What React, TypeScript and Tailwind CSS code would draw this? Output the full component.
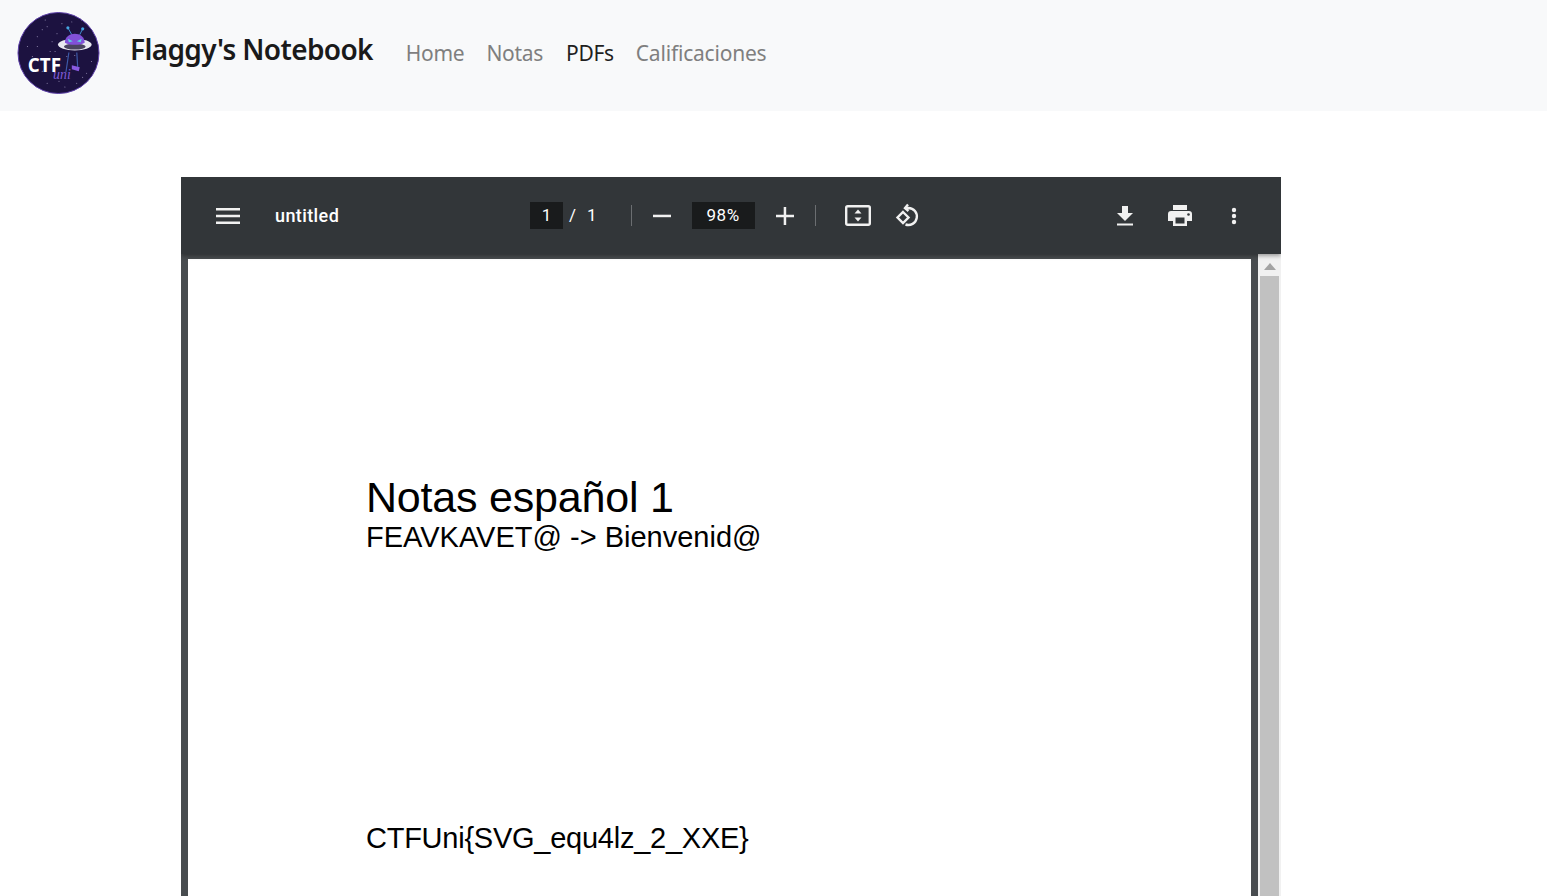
import React from "react";

function Logo() {
  const stars = [[20,25],[30,15],[15,45],[12,55],[25,60],[35,30],[45,12],[55,10],[40,22],[70,62],[72,70],[60,72],[30,72],[20,35],[65,8],[75,50],[50,45],[38,40],[48,76],[25,18],[58,44],[10,35],[33,40],[28,8],[66,66],[42,70]];
  return (
    <svg width="83" height="82" viewBox="0 0 83 83" className="shrink-0">
      <circle cx="41.500" cy="41.500" r="41" fill="#1c1240" stroke="#5b3ea8" strokeWidth="1" />
      {stars.map(([x, y], i) => (
        <circle key={i} cx={x} cy={y} r="0.500" fill="#cfc8e8" />
      ))}
      <path d="M51 16l4 7M66 17l-3 6" stroke="#3f8fd0" strokeWidth="1" />
      <circle cx="51" cy="16" r="1.600" fill="#45a5e0" />
      <circle cx="66" cy="17" r="1.600" fill="#45a5e0" />
      <ellipse cx="58" cy="33" rx="17" ry="6" fill="#e8e8f0" />
      <ellipse cx="58" cy="35" rx="11" ry="3" fill="#4a4560" />
      <path d="M48 31c0-12 20-12 20 0c-5 3-15 3-20 0z" fill="#8150d8" />
      <path d="M51 27l5 2.500l-4 1zM65 27l-5 2.500l4 1z" fill="#5fd0e0" />
      <path d="M52 41l-3 20M60 41l1 16" stroke="#3d5aa8" strokeWidth="1.200" fill="none" />
      <path d="M55 54l8 2l-1 4l-7-2z" fill="#8a5ae0" />
      <text x="10.500" y="61" fill="#fff" fontSize="19" fontWeight="700" fontFamily="'Open Sans', sans-serif">CTF</text>
      <text x="36" y="68" fill="#7f5bd6" fontSize="14" fontStyle="italic" fontFamily="'Liberation Serif', serif">uni</text>
    </svg>
  );
}

function Divider() {
  return <div className="h-[21px] w-px bg-[#6b6e71]" />;
}

export default function App() {
  return (
    <div className="h-[896px] overflow-hidden bg-white font-['Liberation_Sans',sans-serif]">
      <nav className="flex h-[111px] items-center bg-[#f8f9fa] pb-[6px] pl-[17px]">
        <Logo />
        <span className="ml-[30px] -translate-y-[4px] font-['Noto_Sans',sans-serif] text-[28px] font-semibold tracking-[-0.65px] text-[#1a1a1a]">
          Flaggy's Notebook
        </span>
        <div className="ml-[33px] mt-[2px] flex gap-[22px] font-['Noto_Sans',sans-serif] text-[21px] tracking-[-0.3px] text-[#7f7f7f]">
          <span>Home</span>
          <span>Notas</span>
          <span className="ml-px text-[#1f1f1f]">PDFs</span>
          <span className="tracking-[-0.2px]">Calificaciones</span>
        </div>
      </nav>

      <div className="ml-[181px] mt-[66px] flex h-[719px] w-[1100px] flex-col overflow-hidden bg-[#484c4f]">
        <div className="relative z-10 flex h-[77px] shrink-0 items-center bg-[#323639] pl-[35px] pr-[44px] font-['Roboto',sans-serif] text-white shadow-[0_2px_4px_rgba(0,0,0,0.35)]">
          <svg width="24" height="18" viewBox="0 0 24 18" fill="#f1f1f1" className="mt-[1px]">
            <path d="M0 1h24v2.500H0zM0 7.800h24v2.500H0zM0 14.500h24v2.500H0z" />
          </svg>
          <span className="ml-[35px] w-[255px] text-[18px] font-medium tracking-[0.4px]">untitled</span>
          <div className="flex h-[27px] w-[33px] items-center justify-center bg-[#191b1c] text-[17px]">1</div>
          <span className="ml-[6px] text-[17px]">/</span>
          <span className="ml-[11px] text-[17px]">1</span>
          <div className="ml-[34px]"><Divider /></div>
          <svg width="18" height="18" viewBox="0 0 18 18" fill="#f1f1f1" className="ml-[21px]">
            <path d="M0 7.700h18v2.500H0z" />
          </svg>
          <div className="ml-[21px] flex h-[27px] w-[63px] items-center justify-center bg-[#191b1c] text-[17px] tracking-[0.5px]">98%</div>
          <svg width="18" height="18" viewBox="0 0 18 18" fill="#f1f1f1" className="ml-[21px]">
            <path d="M0 7.700h7.700V0h2.500v7.700H18v2.500h-7.800V18H7.700v-7.800H0z" />
          </svg>
          <div className="ml-[21px]"><Divider /></div>
          <svg width="26" height="21" viewBox="0 0 26 21" fill="none" className="ml-[29px]">
            <rect x="1.200" y="1.200" width="23.600" height="18.600" rx="1.500" stroke="#f1f1f1" strokeWidth="2.400" />
            <path d="M13 4.500l3.500 4h-7zM13 16.500l3.500-4h-7z" fill="#f1f1f1" />
          </svg>
          <svg width="26" height="26" viewBox="0 0 26 26" fill="none" className="ml-[24px]">
            <path d="M13 1.500l-3 3.500l3.500 3" stroke="#f1f1f1" strokeWidth="2.400" />
            <path d="M10.500 5h3a8.500 8.500 0 1 1-3 16.500" stroke="#f1f1f1" strokeWidth="2.400" />
            <path d="M8 9l5.500 5.500l-5.500 5.500l-5.500-5.500z" stroke="#f1f1f1" strokeWidth="2.400" />
          </svg>
          <div className="flex-1" />
          <svg width="18" height="20" viewBox="0 0 18 20" fill="#f1f1f1">
            <path d="M6 0h6v7h5l-8 8l-8-8h5zM1 17.500h16v2H1z" />
          </svg>
          <svg width="24" height="21" viewBox="0 0 24 21" fill="#f1f1f1" className="ml-[34px]">
            <path d="M5 0h14v5H5zM3 6h18a3 3 0 0 1 3 3v7h-5v5H5v-5H0V9a3 3 0 0 1 3-3z" />
            <path d="M7.500 12.500h9v6h-9z" fill="#323639" />
            <circle cx="20.500" cy="9.500" r="1.300" fill="#323639" />
          </svg>
          <svg width="6" height="18" viewBox="0 0 6 18" fill="#f1f1f1" className="ml-[39px]">
            <circle cx="3" cy="3" r="2.200" />
            <circle cx="3" cy="9" r="2.200" />
            <circle cx="3" cy="15" r="2.200" />
          </svg>
        </div>
        <div className="flex min-h-0 flex-1">
          <div className="ml-[7px] mt-[5px] flex-1 bg-white text-black">
            <div className="pl-[178px] pt-[213px]">
              <div className="text-[43px] leading-[50px] tracking-[-0.2px]">Notas español 1</div>
              <div className="text-[29px] leading-[30px]">FEAVKAVET@ -&gt; Bienvenid@</div>
              <div className="mt-[270px] text-[29px] leading-[32px] tracking-[-0.25px]">CTFUni{"{"}SVG_equ4lz_2_XXE{"}"}</div>
            </div>
          </div>
          <div className="ml-[7px] flex w-[23px] shrink-0 flex-col items-center bg-[#f1f1f1]">
            <svg width="12" height="7" viewBox="0 0 12 7" className="mb-[6px] mt-[9px]" fill="#a3a3a3">
              <path d="M6 0l6 7H0z" />
            </svg>
            <div className="w-[19px] flex-1 bg-[#c1c1c1]" />
          </div>
        </div>
      </div>
    </div>
  );
}
